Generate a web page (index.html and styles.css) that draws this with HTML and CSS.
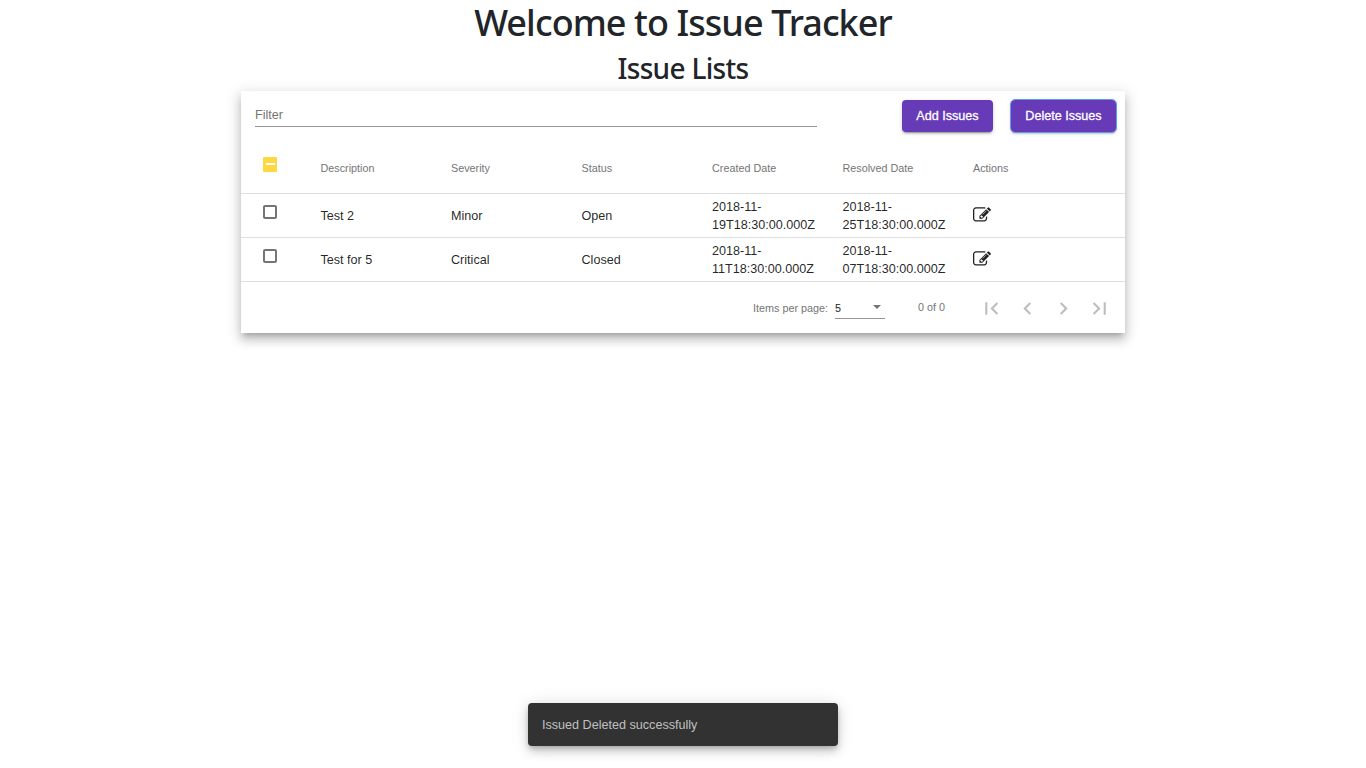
FILE: index.html
```html
<!DOCTYPE html>
<html lang="en">
<head>
<meta charset="utf-8">
<title>Issue Tracker</title>
<link rel="stylesheet" href="styles.css">
</head>
<body>
<svg class="sprite" width="0" height="0">
  <symbol id="edit" viewBox="0 0 1792 1792"><path d="M888 1184l116-116-152-152-116 116v56h96v96h56zm440-720q-16-16-33 1l-350 350q-17 17-1 33t33-1l350-350q17-17 1-33zm80 594v190q0 119-84.5 203.5t-203.5 84.5h-832q-119 0-203.5-84.5t-84.5-203.5v-832q0-119 84.5-203.5t203.5-84.5h832q63 0 117 25 15 7 18 23 3 17-9 29l-49 49q-14 14-32 8-23-6-45-6h-832q-66 0-113 47t-47 113v832q0 66 47 113t113 47h832q66 0 113-47t47-113v-126q0-13 9-22l64-64q15-15 35-7t20 29zm-96-738l288 288-672 672h-288v-288zm444 132l-92 92-288-288 92-92q28-28 68-28t68 28l152 152q28 28 28 68t-28 68z"/></symbol>
</svg>
<header class="heading">
  <h1 class="title">Welcome to Issue Tracker</h1>
  <h2 class="subtitle">Issue Lists</h2>
</header>
<main class="card">
  <div class="toolbar">
    <div class="filter">Filter</div>
    <button class="btn add"><span>Add Issues</span></button>
    <button class="btn delete"><span>Delete Issues</span></button>
  </div>
  <div class="row head">
    <div class="check"><span class="box mixed"></span></div>
    <div>Description</div><div>Severity</div><div>Status</div><div>Created Date</div><div>Resolved Date</div><div>Actions</div>
  </div>
  <div class="row">
    <div class="check"><span class="box"></span></div>
    <div>Test 2</div><div>Minor</div><div>Open</div>
    <div class="date">2018-11-<br>19T18:30:00.000Z</div><div class="date">2018-11-<br>25T18:30:00.000Z</div>
    <div><svg class="edit"><use href="#edit"/></svg></div>
  </div>
  <div class="row">
    <div class="check"><span class="box"></span></div>
    <div>Test for 5</div><div>Critical</div><div>Closed</div>
    <div class="date">2018-11-<br>11T18:30:00.000Z</div><div class="date">2018-11-<br>07T18:30:00.000Z</div>
    <div><svg class="edit"><use href="#edit"/></svg></div>
  </div>
  <div class="paginator">
    <span class="label">Items per page:</span>
    <span class="select"><span>5</span><i class="arrow"></i></span>
    <span class="range">0 of 0</span>
    <nav class="pages">
      <svg viewBox="0 0 24 24"><path d="M18.41 16.59L13.82 12l4.59-4.59L17 6l-6 6 6 6zM6 6h2v12H6z"/></svg>
      <svg viewBox="0 0 24 24"><path d="M15.41 7.41L14 6l-6 6 6 6 1.41-1.41L10.83 12z"/></svg>
      <svg viewBox="0 0 24 24"><path d="M10 6L8.59 7.41 13.17 12l-4.58 4.59L10 18l6-6z"/></svg>
      <svg viewBox="0 0 24 24"><path d="M5.59 7.41L10.18 12l-4.59 4.59L7 18l6-6-6-6zM16 6h2v12h-2z"/></svg>
    </nav>
  </div>
</main>
<div class="snackbar"><span>Issued Deleted successfully</span></div>
</body>
</html>
```
FILE: styles.css
```css
* { box-sizing: border-box; }
body { margin: 0; height: 768px; overflow: hidden; background: #fff; color: #212529; font-family: "Liberation Sans", Arial, sans-serif; }
.sprite { position: absolute; }
.heading { height: 91px; text-align: center; font-family: "Noto Sans", sans-serif; }
.title, .subtitle { margin: 0; font-weight: 500; line-height: 1.2; }
.title { font-size: 36px; height: 50px; padding-top: 1px; letter-spacing: -.93px; }
.subtitle { font-size: 28px; padding-top: 2px; letter-spacing: -.7px; }
.card { width: 884px; height: 242px; margin: 0 auto; background: #fff; box-shadow: 0 5px 5px -3px rgba(0,0,0,.2), 0 7px 9px 1px rgba(0,0,0,.14), 0 3px 14px 2px rgba(0,0,0,.12); }
.toolbar { display: flex; height: 53px; padding: 9px 9px 0 14px; align-items: flex-start; }
.filter { width: 562px; height: 27px; margin-right: 85px; padding-top: 7px; border-bottom: 1px solid #949494; color: #757575; font-size: 12.6px; line-height: 16px; }
.btn { height: 32px; padding: 0; border: 0; border-radius: 4px; background: #673ab7; color: #fff; font: 12.6px/31px "Liberation Sans", Arial, sans-serif; -webkit-text-stroke: .3px #fff; box-shadow: 0 3px 1px -2px rgba(0,0,0,.2), 0 2px 2px rgba(0,0,0,.14), 0 1px 5px rgba(0,0,0,.12); }
.add { width: 91px; margin-right: 18px; }
.delete { width: 105px; outline: 1px solid #5e9bf0; }
.row { display: grid; grid-template-columns: 79.5px repeat(5, 130.5px) 1fr; height: 44px; align-items: center; border-bottom: 1px solid #dedede; font-size: 12.6px; line-height: 18px; color: rgba(0,0,0,.87); }
.head { height: 50px; padding-bottom: 2px; font-size: 10.8px; color: #757575; }
.check { padding-left: 22px; }
.box { display: block; width: 14px; height: 14px; margin-bottom: 7px; border: 2px solid #757575; border-radius: 2px; }
.mixed { height: 15px; padding: 4px 0 0 0; border: 0; border-radius: 1px; background: #ffd740; }
.mixed::after { content: ""; display: block; width: 9px; height: 2px; margin: 2px auto 0; background: #fff; }
.edit { display: block; width: 18px; height: 18px; margin-bottom: 1px; fill: #212121; }
.paginator { display: flex; height: 51px; align-items: center; font-size: 10.8px; color: #757575; padding-left: 512px; }
.label { width: 82px; }
.select { display: flex; width: 50px; height: 21px; margin-top: 1px; justify-content: space-between; align-items: center; padding-right: 4px; border-bottom: 1px solid #949494; color: #212121; }
.arrow { margin-bottom: 2px; border: 4.5px solid transparent; border-top-color: #757575; border-bottom: 0; }
.range { width: 61px; margin: 0 0 2px 33px; }
.pages { display: flex; gap: 11px; margin-top: 2px; }
.pages svg { width: 25px; height: 25px; fill: #bdbdbd; }
.snackbar { position: absolute; left: 528px; top: 703px; width: 310px; height: 43px; padding-left: 14px; border-radius: 4px; background: #323232; color: rgba(255,255,255,.7); font-size: 12.6px; line-height: 44px; box-shadow: 0 3px 5px -1px rgba(0,0,0,.2), 0 6px 10px rgba(0,0,0,.14), 0 1px 18px rgba(0,0,0,.12); }
```
